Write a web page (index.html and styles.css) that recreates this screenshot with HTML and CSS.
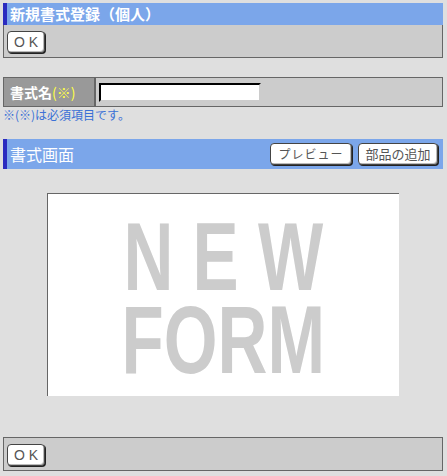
FILE: index.html
```html
<!DOCTYPE html>
<html lang="ja">
<head>
    <meta charset="UTF-8">
    <title>新規書式登録（個人）</title>
    <link rel="stylesheet" href="styles.css">
</head>
<body>
    <div class="title-bar">新規書式登録（個人）</div>
    <div class="toolbar">
        <button type="button" class="btn btn-ok">OK</button>
    </div>

    <div class="form-row">
        <div class="form-label">書式名<span class="required">(※)</span></div>
        <div class="form-field">
            <input type="text" id="formName" name="formName">
        </div>
    </div>
    <p class="note">※(※)は必須項目です。</p>

    <div class="section-bar">
        <span class="section-title">書式画面</span>
        <div class="section-buttons">
            <button type="button" class="btn btn-preview">プレビュー</button>
            <button type="button" class="btn btn-add">部品の追加</button>
        </div>
    </div>

    <div class="canvas">
        <div class="placeholder">
            <span>N E W</span>
            <span>FORM</span>
        </div>
    </div>

    <div class="toolbar toolbar-bottom">
        <button type="button" class="btn btn-ok">OK</button>
    </div>
</body>
</html>
```

FILE: styles.css
```css
body {
    margin: 3px 4px 3px 3px;
    background-color: #dfdfdf;
    font-family: "Noto Sans CJK JP", "DejaVu Sans", sans-serif;
    font-size: 12px;
}
.title-bar {
    height: 22px;
    line-height: 22px;
    background-color: #7ba6ea;
    border-left: 4px solid #2b2bbf;
    padding-left: 3px;
    color: #fff;
    font-size: 15px;
    font-weight: bold;
}
.toolbar {
    height: 32px;
    border: 1px solid #666;
    border-top: none;
    background-color: #cccccc;
    display: flex;
    align-items: center;
    padding-left: 3px;
}
.toolbar-bottom {
    margin-top: 41px;
    border-top: 1px solid #666;
}
.btn {
    height: 22px;
    padding: 0 8px;
    background: #fff;
    border: 1px solid #444;
    border-radius: 4px;
    box-shadow: 1px 1px 0 #222, inset -1px -1px 0 #bbb;
    color: #555;
    font-family: "Noto Sans CJK JP", "DejaVu Sans", sans-serif;
    font-size: 13px;
    line-height: 18px;
    white-space: nowrap;
    cursor: pointer;
}
.btn-ok {
    width: 38px;
    margin-top: 1px;
    font-family: "Liberation Sans", Arial, sans-serif;
    font-size: 14px;
    font-weight: 300;
    letter-spacing: 4px;
    padding: 0 0 0 4px;
}
.form-row {
    margin-top: 19px;
    display: flex;
    height: 28px;
    border: 1px solid #666;
    background-color: #cccccc;
}
.form-label {
    width: 84px;
    padding-left: 6px;
    background-color: #999999;
    border-right: 2px solid #666;
    color: #fff;
    font-size: 14px;
    font-weight: bold;
    line-height: 28px;
}
.required {
    color: #ffff44;
    font-weight: normal;
}
.form-field {
    display: flex;
    align-items: center;
    padding-left: 3px;
}
.form-field input {
    width: 154px;
    height: 15px;
    margin: 0;
    padding: 0 2px;
    border: 2px solid #ccc;
    border-top-color: #000;
    border-left-color: #000;
    background: #fff;
}
.note {
    margin: 1px 0 0;
    color: #3a70d6;
    font-size: 12px;
    line-height: 14px;
}
.section-bar {
    margin-top: 17px;
    height: 30px;
    display: flex;
    align-items: center;
    justify-content: space-between;
    background-color: #7ba6ea;
    border-left: 4px solid #2b2bbf;
    padding: 0 5px 0 3px;
}
.section-title {
    color: #fff;
    font-size: 16px;
}
.section-buttons {
    display: flex;
    gap: 6px;
}
.btn-preview {
    width: 82px;
    padding: 0;
    font-size: 12px;
    letter-spacing: 1px;
}
.btn-add {
    width: 80px;
    padding: 0;
}
.canvas {
    margin: 24px 0 0 44px;
    width: 351px;
    height: 202px;
    background: #fff;
    border-top: 1px solid #666;
    border-left: 1px solid #666;
    display: flex;
    align-items: center;
    justify-content: center;
}
.placeholder {
    display: flex;
    flex-direction: column;
    align-items: center;
    padding-top: 6px;
    color: #cccccc;
    font-family: "Liberation Sans Narrow", "Liberation Sans", sans-serif;
    font-weight: bold;
    font-size: 96px;
    line-height: 83px;
    transform: scaleX(0.72);
}
```
